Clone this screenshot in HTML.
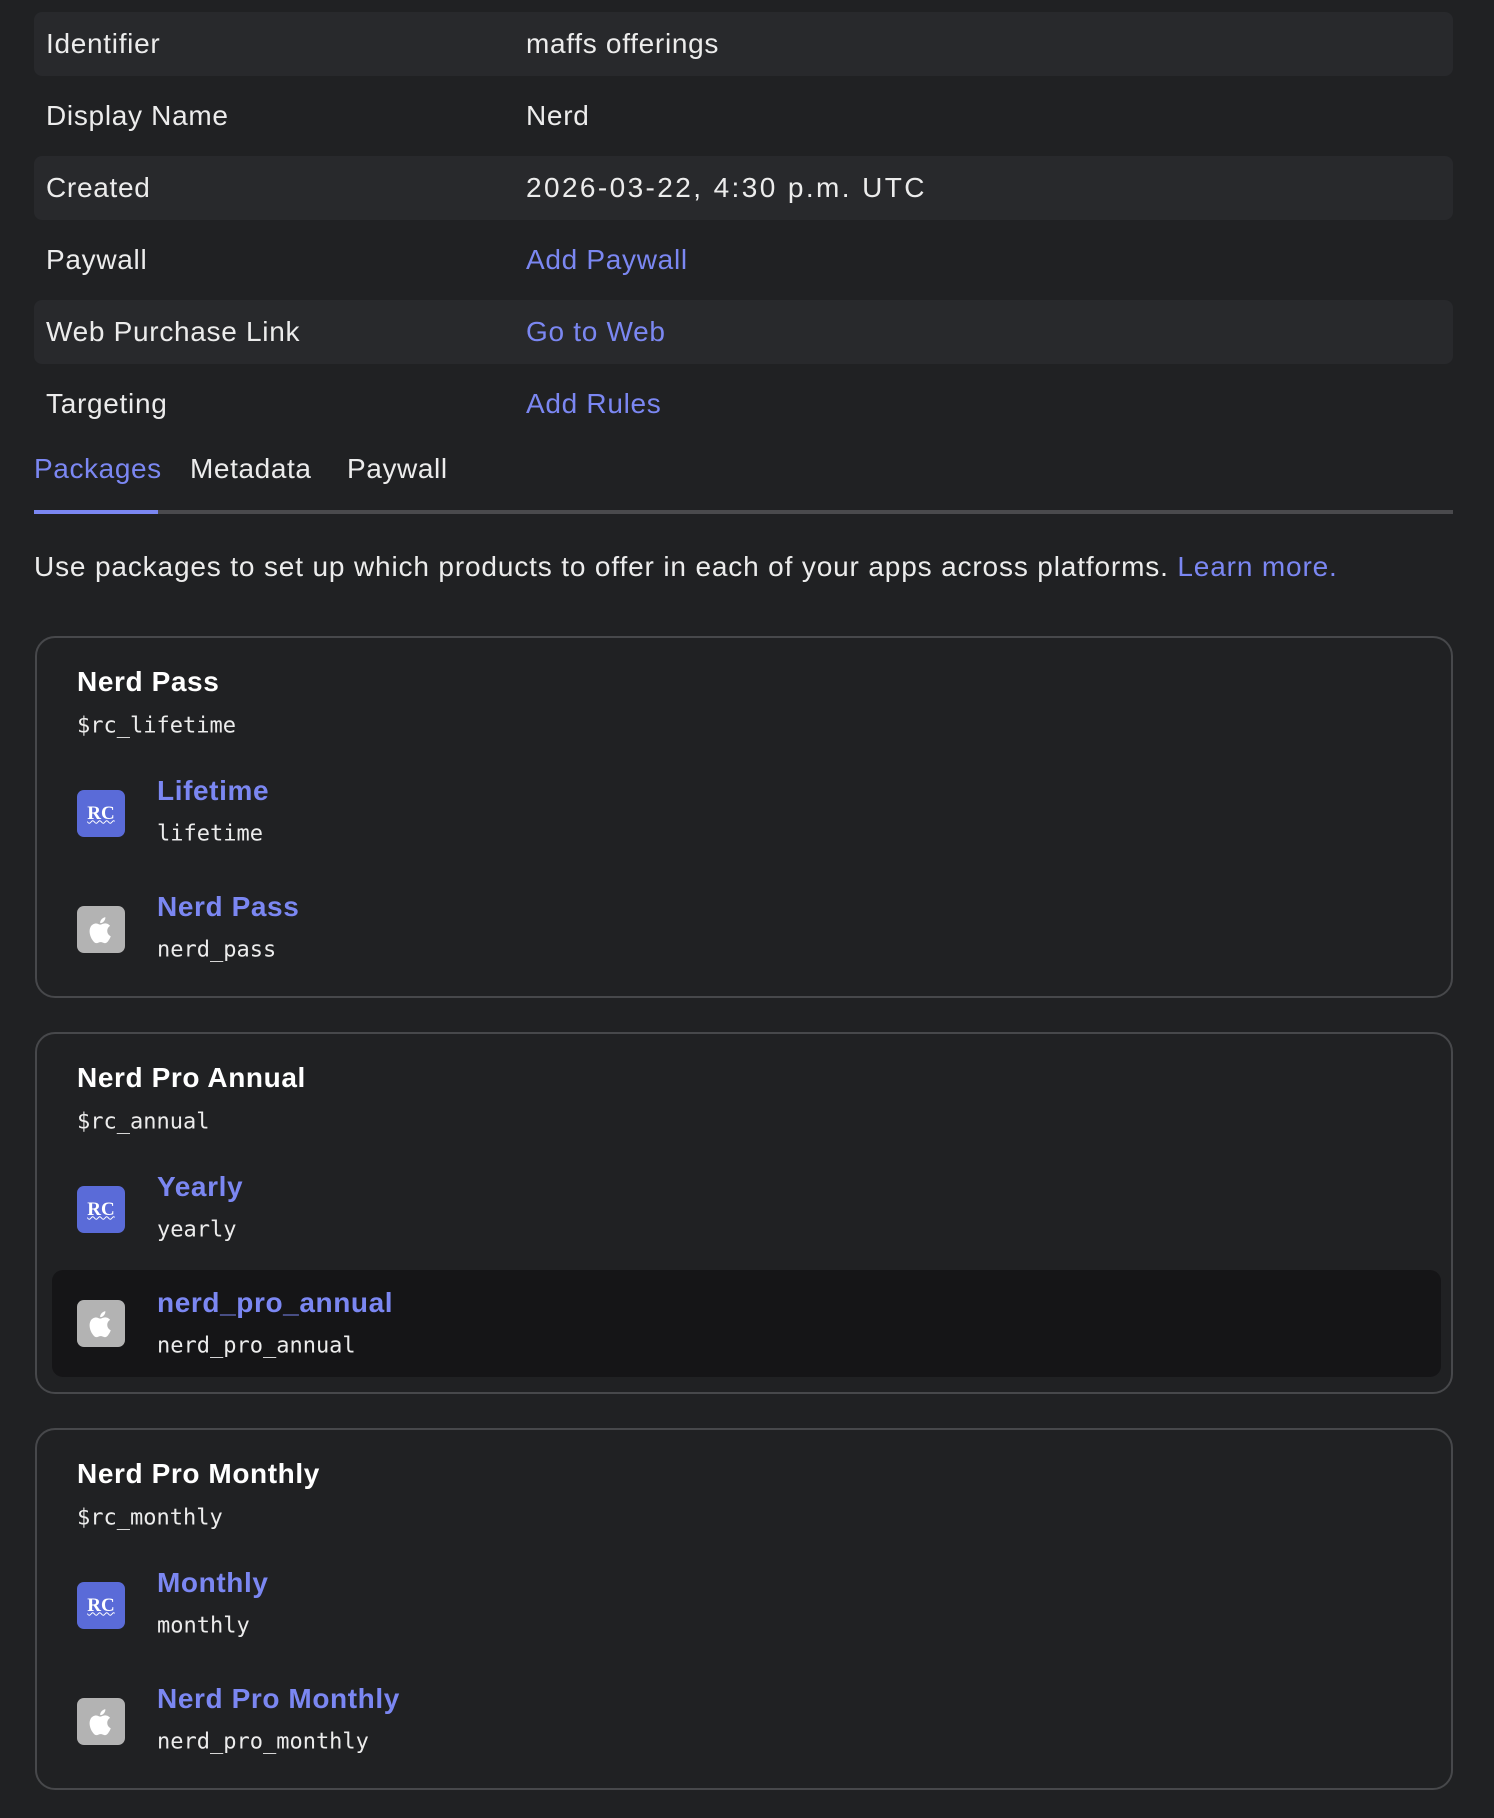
<!DOCTYPE html>
<html><head><meta charset="utf-8"><style>
*{margin:0;padding:0;box-sizing:border-box}
body{width:1494px;height:1818px;background:#202123;font-family:"Liberation Sans",Arial,sans-serif;color:#ececec;position:relative;overflow:hidden}
.a{position:absolute}
.row{position:absolute;left:34px;width:1419px;height:64px;border-radius:8px}
.row.bg{background:#28292c}
.row span{position:absolute;top:50%;transform:translateY(-50%);font-size:28px;letter-spacing:0.7px;white-space:nowrap}
.row .l{left:12px}.row .v{left:492px}
.link{color:#7b87f2}
.mono{font-family:"DejaVu Sans Mono","Liberation Mono",monospace}
.card{position:absolute;left:35px;width:1418px;border:2px solid #47484b;border-radius:20px;height:362px}
.t{position:absolute;left:40px;font-weight:bold;font-size:28px;letter-spacing:0.6px;transform:translateY(-50%);white-space:nowrap;color:#fff}
.id{position:absolute;left:40px;font-size:22px;transform:translateY(-50%);white-space:nowrap}
.ic{position:absolute;left:40px;width:48px;height:47px;border-radius:7px;display:flex;align-items:center;justify-content:center}
.rc{background:#5a6bd8;color:#fff;font-weight:bold;font-size:19px;font-family:"Liberation Serif",serif;text-decoration:underline wavy;text-decoration-thickness:1px}
.ap{background:#b3b3b3}
.it{position:absolute;left:120px;font-weight:bold;font-size:28px;letter-spacing:0.6px;color:#7b87f2;transform:translateY(-50%);white-space:nowrap}
.is{position:absolute;left:120px;font-size:22px;transform:translateY(-50%);white-space:nowrap}
.hl{position:absolute;left:15px;width:1389px;top:236px;height:107px;background:#151517;border-radius:11px}
.tab{position:absolute;top:453px;font-size:28px;letter-spacing:0.6px}
</style></head><body>
<div class="row bg" style="top:12px"><span class="l">Identifier</span><span class="v">maffs offerings</span></div>
<div class="row" style="top:84px"><span class="l">Display Name</span><span class="v">Nerd</span></div>
<div class="row bg" style="top:156px"><span class="l">Created</span><span class="v" style="letter-spacing:2.4px">2026-03-22, 4:30 p.m. UTC</span></div>
<div class="row" style="top:228px"><span class="l">Paywall</span><span class="v link">Add Paywall</span></div>
<div class="row bg" style="top:300px"><span class="l">Web Purchase Link</span><span class="v link">Go to Web</span></div>
<div class="row" style="top:372px"><span class="l">Targeting</span><span class="v link">Add Rules</span></div>

<div class="tab link" style="left:34px">Packages</div>
<div class="tab" style="left:190px">Metadata</div>
<div class="tab" style="left:347px">Paywall</div>
<div class="a" style="left:34px;top:510px;width:1419px;height:4px;background:#4a4a4d"></div>
<div class="a" style="left:34px;top:510px;width:124px;height:4px;background:#7b87f2"></div>

<div class="a" style="left:34px;top:551px;font-size:28px;letter-spacing:0.85px;white-space:nowrap">Use packages to set up which products to offer in each of your apps across platforms. <span class="link">Learn more.</span></div>

<svg width="0" height="0" style="position:absolute"><defs>
<symbol id="apple" viewBox="0 0 24 24"><path fill="#fff" d="M16.4 12.6c0-2.3 1.9-3.4 2-3.5-1.1-1.6-2.8-1.8-3.4-1.8-1.4-.1-2.8.9-3.5.9-.7 0-1.8-.8-3-.8-1.5 0-3 .9-3.8 2.3-1.6 2.8-.4 7 1.2 9.3.8 1.1 1.7 2.4 2.9 2.3 1.2 0 1.6-.7 3-.7s1.8.7 3 .7c1.3 0 2.1-1.1 2.8-2.3.9-1.3 1.3-2.6 1.3-2.6s-2.5-1-2.5-3.8zM14.1 5.8c.6-.8 1.1-1.8 1-2.8-.9 0-2 .6-2.7 1.4-.6.7-1.1 1.7-1 2.7 1 .1 2-.5 2.7-1.3z"/></symbol>
</defs></svg>

<div class="card" style="top:636px">
<div class="t" style="top:44px">Nerd Pass</div>
<div class="id mono" style="top:88px">$rc_lifetime</div>
<div class="ic rc" style="top:152px">RC</div>
<div class="it" style="top:153px">Lifetime</div>
<div class="is mono" style="top:196px">lifetime</div>
<div class="ic ap" style="top:268px"><svg width="34" height="34"><use href="#apple"/></svg></div>
<div class="it" style="top:269px">Nerd Pass</div>
<div class="is mono" style="top:312px">nerd_pass</div>
</div>

<div class="card" style="top:1032px">
<div class="hl"></div>
<div class="t" style="top:44px">Nerd Pro Annual</div>
<div class="id mono" style="top:88px">$rc_annual</div>
<div class="ic rc" style="top:152px">RC</div>
<div class="it" style="top:153px">Yearly</div>
<div class="is mono" style="top:196px">yearly</div>
<div class="ic ap" style="top:266px"><svg width="34" height="34"><use href="#apple"/></svg></div>
<div class="it" style="top:269px">nerd_pro_annual</div>
<div class="is mono" style="top:312px">nerd_pro_annual</div>
</div>

<div class="card" style="top:1428px">
<div class="t" style="top:44px">Nerd Pro Monthly</div>
<div class="id mono" style="top:88px">$rc_monthly</div>
<div class="ic rc" style="top:152px">RC</div>
<div class="it" style="top:153px">Monthly</div>
<div class="is mono" style="top:196px">monthly</div>
<div class="ic ap" style="top:268px"><svg width="34" height="34"><use href="#apple"/></svg></div>
<div class="it" style="top:269px">Nerd Pro Monthly</div>
<div class="is mono" style="top:312px">nerd_pro_monthly</div>
</div>
</body></html>
